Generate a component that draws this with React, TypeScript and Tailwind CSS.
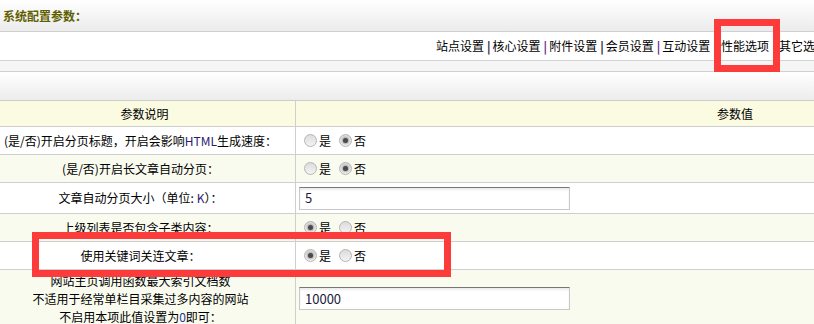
import React from 'react';

const font = { fontFamily: '"Noto Sans CJK SC", "Liberation Sans", sans-serif' };

function Radio({ checked }: { checked?: boolean }) {
  return (
    <span className="w-[13px] h-[13px] rounded-full border border-[#b5b5b5] bg-gradient-to-b from-[#dcdcdc] to-[#f3f3f3] flex items-center justify-center shrink-0">
      {checked && <span className="w-[5px] h-[5px] rounded-full bg-[#4a4a4a] shadow-[0_0_2px_1px_rgba(80,80,80,0.45)]" />}
    </span>
  );
}

function YesNo({ yes }: { yes?: boolean }) {
  return (
    <div className="flex items-center pl-[8px]">
      <Radio checked={yes} />
      <span className="ml-[2px] mr-[8px]">是</span>
      <Radio checked={!yes} />
      <span className="ml-[2px]">否</span>
    </div>
  );
}

function TextInput({ value }: { value: string }) {
  return (
    <div className="ml-[3px] w-[271px] h-[23px] border border-[#c8c8c8] border-t-[#777] bg-white shadow-[inset_0_2px_2px_rgba(0,0,0,0.08)] flex items-center pl-[5px] text-[13px] text-[#1a1a40]">
      {value}
    </div>
  );
}

function Row({ h, alt, label, children }: { h: string; alt?: boolean; label: React.ReactNode; children?: React.ReactNode }) {
  return (
    <div className={`flex border-b border-[#cfcfcf] ${h} ${alt ? 'bg-[#f9fbef]' : 'bg-white'}`}>
      <div className="w-[296px] shrink-0 border-r border-[#cfcfcf] flex items-center justify-center text-center pr-[14px] leading-[18px]">
        {label}
      </div>
      <div className="flex-1 flex items-center">{children}</div>
    </div>
  );
}

export default function App() {
  return (
    <div className="relative w-[814px] h-[324px] overflow-hidden bg-white text-[12px] text-black" style={font}>
      {/* 标题 */}
      <div className="h-[32px] border-b border-[#d0d0d0] bg-gradient-to-b from-white to-[#ebebeb] flex items-center pl-[3px]">
        <span className="font-bold text-[#5f5f00] text-[12px]">系统配置参数：</span>
      </div>

      {/* 导航 */}
      <div className="h-[29px] border-b border-[#d4d4d4] bg-white flex items-center pl-[436px] whitespace-nowrap text-[12px]">
        {['站点设置', '核心设置', '附件设置', '会员设置', '互动设置'].map((t, i) => (
          <React.Fragment key={t}>
            <span>{t}</span>
            <span className={`ml-[3px] mr-[2px] font-bold ${i % 2 ? 'text-[#6a1f8a]' : 'text-[#222244]'}`}>|</span>
          </React.Fragment>
        ))}
        <span className="ml-[2px]">性能选项</span>
        <span className="ml-[10px]">其它选项</span>
      </div>

      <div className="h-[11px] border-b border-[#d0d0d0] bg-[#f5f5f5]" />
      <div className="h-[29px] border-b border-[#cccccc] bg-gradient-to-b from-white to-[#ececec]" />

      {/* 表格 */}
      <div className="w-[1180px]">
        <div className="flex h-[26px] border-b border-[#cfcfcf] bg-[#fbfbe2]">
          <div className="w-[296px] shrink-0 border-r border-[#cfcfcf] flex items-center justify-center pr-[6px]">参数说明</div>
          <div className="flex-1 flex items-center justify-center pr-[6px]">参数值</div>
        </div>

        <Row h="h-[28px]" label={<span>(是/否)开启分页标题，开启会影响<span className="text-[#2b1a72]">HTML</span>生成速度：</span>}>
          <YesNo />
        </Row>
        <Row h="h-[28px]" alt label="(是/否)开启长文章自动分页：">
          <YesNo />
        </Row>
        <Row h="h-[31px]" label={<span>文章自动分页大小（单位: <span className="text-[#2b1a72]">K</span>）：</span>}>
          <TextInput value="5" />
        </Row>
        <Row h="h-[28px]" alt label="上级列表是否包含子类内容：">
          <YesNo yes />
        </Row>
        <Row h="h-[28px]" label="使用关键词关连文章：">
          <YesNo yes />
        </Row>
        <Row h="h-[58px]" alt label={
          <div className="flex flex-col items-center">
            <span>网站主页调用函数最大索引文档数</span>
            <span>不适用于经常单栏目采集过多内容的网站</span>
            <span>不启用本项此值设置为<span className="text-[#1a3a9a]">0</span>即可：</span>
          </div>
        }>
          <TextInput value="10000" />
        </Row>
      </div>

      {/* 标注框 */}
      <div className="absolute left-[714px] top-[19px] w-[66px] h-[53px] border-[7px] border-[#fe3b3b]" />
      <div className="absolute left-[32px] top-[232px] w-[419px] h-[45px] border-[7px] border-[#fe3b3b]" />
    </div>
  );
}
